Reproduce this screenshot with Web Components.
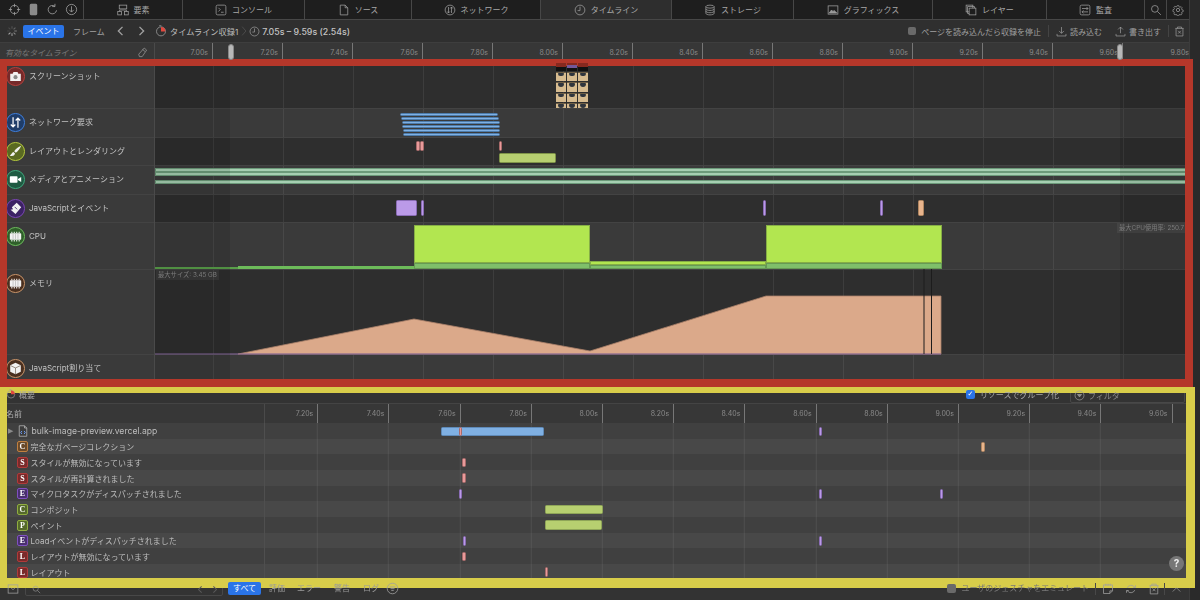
<!DOCTYPE html>
<html lang="ja">
<head>
<meta charset="utf-8">
<title>Web Inspector</title>
<style>
  html, body { margin: 0; height: 100%; background: #2a2a2a; overflow: hidden; }
  body { font: 8px Inter, "Noto Sans CJK JP", sans-serif; color: #b4b4b4; }
  /* notes sit in the light DOM of their row */
  .note { position: absolute; top: 1px; left: 962px; padding: 0 2px; line-height: 10px; font-size: 6.3px; background: rgba(255,255,255,.05); color: #7c7c7c; white-space: nowrap; z-index: 2; }
  .note.left { left: 1px; }
</style>
</head>
<body>
<inspector-app>
  <tab-bar>
    <tool-strip slot="tools"></tool-strip>
    <inspector-tab icon="elements">要素</inspector-tab>
    <inspector-tab icon="console">コンソール</inspector-tab>
    <inspector-tab icon="source">ソース</inspector-tab>
    <inspector-tab icon="network">ネットワーク</inspector-tab>
    <inspector-tab icon="clock" active>タイムライン</inspector-tab>
    <inspector-tab icon="storage">ストレージ</inspector-tab>
    <inspector-tab icon="graphics">グラフィックス</inspector-tab>
    <inspector-tab icon="layers">レイヤー</inspector-tab>
    <inspector-tab icon="audit">監査</inspector-tab>
    <inspector-tab icon="search"></inspector-tab>
    <inspector-tab icon="gear"></inspector-tab>
  </tab-bar>
  <timeline-toolbar></timeline-toolbar>
  <time-ruler first="7.00" offset="58" step="70" count="15" width="155" last-open>
    <i>有効なタイムライン</i>
    <svg-icon name="pencil" size="11" slot="end"></svg-icon>
  </time-ruler>

  <timeline-rows>
    <timeline-row label="スクリーンショット" icon="camera" ring="#b5403c" fill="#762a2a" height="46" dark>
      <film-strip></film-strip>
    </timeline-row>
    <timeline-row label="ネットワーク要求" icon="updown" ring="#3f7fdc" fill="#1f3d69" height="29">
      <timeline-bar x="245" w="98" y="4.5" h="3" color="#7fb0e3" line="#4d7cab"></timeline-bar>
      <timeline-bar x="246" w="98" y="8.5" h="3" color="#7fb0e3" line="#4d7cab"></timeline-bar>
      <timeline-bar x="246.5" w="98" y="12.5" h="3" color="#7fb0e3" line="#4d7cab"></timeline-bar>
      <timeline-bar x="247" w="97.5" y="16.5" h="3" color="#7fb0e3" line="#4d7cab"></timeline-bar>
      <timeline-bar x="247.5" w="97" y="20.5" h="3" color="#7fb0e3" line="#4d7cab"></timeline-bar>
      <timeline-bar x="247.5" w="97" y="24.5" h="3" color="#7fb0e3" line="#4d7cab"></timeline-bar>
    </timeline-row>
    <timeline-row label="レイアウトとレンダリング" icon="brush" ring="#b4c83e" fill="#5a6a22" height="28" dark>
      <timeline-bar x="261" w="3.6" y="4" h="9.5" color="#e89a9a" line="#a86a6a"></timeline-bar>
      <timeline-bar x="265" w="3.6" y="4" h="9.5" color="#e89a9a" line="#a86a6a"></timeline-bar>
      <timeline-bar x="343.5" w="3.6" y="4" h="9.5" color="#e89a9a" line="#a86a6a"></timeline-bar>
      <timeline-bar x="344" w="56.5" y="16" h="10" color="#b7cf70" line="#7f9448"></timeline-bar>
    </timeline-row>
    <timeline-row label="メディアとアニメーション" icon="video" ring="#3fa67c" fill="#1f5a42" height="29">
      <timeline-bar x="0" w="1034" y="3.2" h="3.5" color="#a6cfb2" line="#6c9a7a" flat></timeline-bar>
      <timeline-bar x="0" w="1034" y="7" h="3.5" color="#a6cfb2" line="#6c9a7a" flat></timeline-bar>
      <timeline-bar x="0" w="1034" y="15" h="3.5" color="#a6cfb2" line="#6c9a7a" flat></timeline-bar>
    </timeline-row>
    <timeline-row label="JavaScriptとイベント" icon="script" ring="#7a46b4" fill="#3c2264" height="28" dark>
      <timeline-bar x="241" w="20.5" y="6" h="16" color="#bb9ae8" line="#8a6cb5"></timeline-bar>
      <timeline-bar x="266" w="3.4" y="6" h="16" color="#bb9ae8" line="#8a6cb5"></timeline-bar>
      <timeline-bar x="608" w="3.4" y="6" h="16" color="#bb9ae8" line="#8a6cb5"></timeline-bar>
      <timeline-bar x="725" w="3.4" y="6" h="16" color="#bb9ae8" line="#8a6cb5"></timeline-bar>
      <timeline-bar x="763" w="5.6" y="6" h="16" color="#e8b48c" line="#b08660"></timeline-bar>
    </timeline-row>
    <timeline-row label="CPU" icon="chip" ring="#6cba5c" fill="#2f5f2a" height="47">
      <span slot="note" class="note">最大CPU使用率: 250.7%</span>
      <timeline-bar x="0" w="83" y="45" h="2" color="#5aa04a" flat></timeline-bar>
      <timeline-bar x="83" w="176" y="44" h="3" color="#6dbb5a" flat></timeline-bar>
      <timeline-bar x="259" w="176" y="3" h="38" color="#b2e650" line="#86ad46" flat></timeline-bar>
      <timeline-bar x="259" w="176" y="41" h="6" color="#7fbf6a" line="#669a55" flat></timeline-bar>
      <timeline-bar x="435" w="176" y="39" h="4" color="#b2e650" line="#86ad46" flat></timeline-bar>
      <timeline-bar x="435" w="176" y="43" h="4" color="#7fbf6a" line="#669a55" flat></timeline-bar>
      <timeline-bar x="611" w="175.5" y="3" h="38" color="#b2e650" line="#86ad46" flat></timeline-bar>
      <timeline-bar x="611" w="175.5" y="41" h="6" color="#7fbf6a" line="#669a55" flat></timeline-bar>
    </timeline-row>
    <timeline-row label="メモリ" icon="chip" ring="#c8946a" fill="#4a3020" height="85" dark>
      <span slot="note" class="note left">最大サイズ: 3.45 GB</span>
      <memory-graph points="83,85 259,50 435,82 611,27 786,27 786,85" width="786" marks="769,776.5"></memory-graph>
    </timeline-row>
    <timeline-row label="JavaScript割り当て" icon="cube" ring="#c8946a" fill="#4a3020" height="30"></timeline-row>
  </timeline-rows>

  <records-panel>
    <scope-bar></scope-bar>
    <time-ruler first="7.20" offset="53.3" step="71.2" count="13" width="265">
      <span style="color:#b0b0b0;margin-left:1px">名前</span>
    </time-ruler>
    <record-row file label="bulk-image-preview.vercel.app">
      <timeline-bar x="176" w="103" y="3.5" h="9.5" color="#7fb0e3" line="#5f8ab8"></timeline-bar>
      <timeline-bar x="193.5" w="3.4" y="3.5" h="9.5" color="#e89a9a" line="#a86a6a"></timeline-bar>
      <timeline-bar x="553.5" w="3.2" y="3.5" h="9.5" color="#bb9ae8" line="#8a6cb5"></timeline-bar>
    </record-row>
    <record-row letter="C" ring="#c08040" fill="#6a4a2a" label="完全なガベージコレクション">
      <timeline-bar x="716" w="4" y="3.5" h="9.5" color="#e8b48c" line="#b08660"></timeline-bar>
    </record-row>
    <record-row letter="S" ring="#b03a3a" fill="#7a2a2a" label="スタイルが無効になっています">
      <timeline-bar x="197" w="3.6" y="3.5" h="9.5" color="#e89a9a" line="#a86a6a"></timeline-bar>
    </record-row>
    <record-row letter="S" ring="#b03a3a" fill="#7a2a2a" label="スタイルが再計算されました">
      <timeline-bar x="197" w="3.6" y="3.5" h="9.5" color="#e89a9a" line="#a86a6a"></timeline-bar>
    </record-row>
    <record-row letter="E" ring="#8050c0" fill="#4a2f70" label="マイクロタスクがディスパッチされました">
      <timeline-bar x="193.7" w="3.2" y="3.5" h="9.5" color="#bb9ae8" line="#8a6cb5"></timeline-bar>
      <timeline-bar x="553.5" w="3.2" y="3.5" h="9.5" color="#bb9ae8" line="#8a6cb5"></timeline-bar>
      <timeline-bar x="674.5" w="3.2" y="3.5" h="9.5" color="#bb9ae8" line="#8a6cb5"></timeline-bar>
    </record-row>
    <record-row letter="C" ring="#90ad40" fill="#55692a" label="コンポジット">
      <timeline-bar x="279.5" w="58.5" y="3.5" h="9.5" color="#b7cf70" line="#8fa558"></timeline-bar>
    </record-row>
    <record-row letter="P" ring="#90ad40" fill="#55692a" label="ペイント">
      <timeline-bar x="279.5" w="57.5" y="3.5" h="9.5" color="#b7cf70" line="#8fa558"></timeline-bar>
    </record-row>
    <record-row letter="E" ring="#8050c0" fill="#4a2f70" label="Loadイベントがディスパッチされました">
      <timeline-bar x="198" w="3.2" y="3.5" h="9.5" color="#bb9ae8" line="#8a6cb5"></timeline-bar>
      <timeline-bar x="553.5" w="3.2" y="3.5" h="9.5" color="#bb9ae8" line="#8a6cb5"></timeline-bar>
    </record-row>
    <record-row letter="L" ring="#b03a3a" fill="#7a2a2a" label="レイアウトが無効になっています">
      <timeline-bar x="197.3" w="3.6" y="3.5" h="9.5" color="#e89a9a" line="#a86a6a"></timeline-bar>
    </record-row>
    <record-row letter="L" ring="#b03a3a" fill="#7a2a2a" label="レイアウト">
      <timeline-bar x="279.5" w="3.4" y="3.5" h="9.5" color="#e89a9a" line="#a86a6a"></timeline-bar>
    </record-row>
    <help-badge slot="help"></help-badge>
  </records-panel>
  <console-bar></console-bar>

  <range-handle style="left:228px"></range-handle>
  <range-handle style="left:1117px"></range-handle>
  <note-frame color="#b5372a" style="left:0;top:59px;width:1193px;height:328px" edge="7 8 8 7"></note-frame>
  <note-frame color="#d8cd4a" style="left:0;top:387px;width:1195px;height:201px" edge="6 9 10 7"></note-frame>
</inspector-app>

<script>
const spokes = [0, 45, 90, 135, 180, 225, 270, 315].map((a, i) =>
  `<path d="M8 1.500V5" stroke="${["#555", "#666", "#777", "#888", "#999", "#aaa", "#444", "#4c4c4c"][i]}" stroke-width="1.400" transform="rotate(${a} 8 8)"/>`).join("");

const ICONS = {
  spinner: spokes,
  target: '<circle cx="8" cy="8" r="5"/><path d="M8 1v4M8 11v4M1 8h4M11 8h4"/>',
  device: '<rect x="4" y="1.500" width="8" height="13" rx="1" fill="#8a8a8a"/>',
  reload: '<path d="M13 9a5.200 5.200 0 1 1-2-5M11 1v3.400H7.600"/>',
  download: '<circle cx="8" cy="8" r="6.300"/><path d="M8 4v7M5.200 8.400 8 11.200l2.800-2.800"/>',
  elements: '<rect x="3" y="1.500" width="10" height="5"/><rect x="1" y="10" width="5" height="4.500"/><rect x="10" y="10" width="5" height="4.500"/><path d="M3.500 10V8h9v2"/>',
  console: '<rect x="1.500" y="1.500" width="13" height="13" rx="2"/><path d="M4.500 5 7 7.500 4.500 10M8 11h3.500"/>',
  source: '<path d="M3 1.500h6.500L13 5v9.500H3zM9.500 1.500V5H13"/>',
  network: '<circle cx="8" cy="8" r="6.500"/><path d="M6 4v8M4.200 10 6 12l1.800-2M10 12V4M8.200 6 10 4l1.800 2"/>',
  clock: '<circle cx="8" cy="8" r="6.500"/><path d="M8 3.500V8.800H4.800"/>',
  storage: '<ellipse cx="8" cy="3.500" rx="5.500" ry="2"/><path d="M2.500 3.500v9c0 1.100 2.500 2 5.500 2s5.500-.9 5.500-2v-9M2.500 6.600c0 1.100 2.500 2 5.500 2s5.500-.9 5.500-2M2.500 9.600c0 1.100 2.500 2 5.500 2s5.500-.9 5.500-2"/>',
  graphics: '<rect x="1.500" y="2.500" width="13" height="11"/><path d="M3 12l3-4 2 2 1.500-1.500L13 12z" fill="#9a9a9a"/>',
  layers: '<rect x="1.500" y="1.500" width="9" height="9"/><rect x="3.500" y="3.500" width="9" height="9"/><rect x="5.500" y="5.500" width="9" height="9" fill="#1e1e1e"/>',
  audit: '<rect x="1.500" y="1.500" width="13" height="13" rx="2"/><path d="M4 6h8M10 4l2 2-2 2M12 10.500H4M6 8.500l-2 2 2 2"/>',
  search: '<circle cx="6.500" cy="6.500" r="4.500"/><path d="M10 10l4.500 4.500"/>',
  gear: '<circle cx="8" cy="8" r="2.200"/><path d="M6.800 1.500h2.400l.4 1.900 1.300.6 1.700-1 1.600 1.700-1 1.600.6 1.400 1.900.4v2.400l-1.900.4-.6 1.300 1 1.700-1.700 1.600-1.600-1-1.400.6-.4 1.600H6.800l-.4-1.700-1.300-.6-1.700 1-1.600-1.600 1-1.700-.6-1.300-1.700-.4V7.500l1.700-.4.6-1.400-1-1.600 1.600-1.700 1.700 1 1.300-.6z" transform="translate(.8 .8) scale(.9)"/>',
  pencil: '<path d="M10.500 1.500 14 4.500 7.500 14H3.500l-1-3.500zM8 3.500l3.600 3"/>',
  left: '<path d="M10 2.500 4.500 8l5.500 5.500" stroke-width="1.800"/>',
  right: '<path d="M6 2.500 11.500 8 6 13.500" stroke-width="1.800"/>',
  crumb: '<path d="M5 1l6 7-6 7"/>',
  record: '<circle cx="8" cy="8.500" r="6"/><path d="M8 8.500V2.500A6 6 0 0 1 14 8.500z" fill="#e0483e" stroke="none"/><path d="M5.500 1h3"/>',
  import: '<path d="M8 1.500v9M4.500 7.200 8 10.700l3.500-3.500M1.500 11.500v3h13v-3"/>',
  export: '<path d="M8 10.500v-9M4.500 5 8 1.500 11.500 5M1.500 11.500v3h13v-3"/>',
  trash: '<path d="M2 3.500h12M3 3.500v11h10v-11M5 3.500V1.500h6v2M6 7l4 4M10 7l-4 4"/>',
  filter: '<circle cx="8" cy="8" r="6.500"/><path d="M5 6.500h6l-3 3.500z" fill="#8a8a8a"/>',
  filterlines: '<circle cx="8" cy="8" r="6.500"/><path d="M4.500 6h7M5.500 8.200h5M6.500 10.400h3"/>',
  console2: '<rect x="1.500" y="2.500" width="13" height="11"/><path d="M5 6l3 3 3-3"/>',
  note: '<path d="M2 2.500h12v8l-3.500 3.500H2zM10.500 14v-3.500H14M5 1v3M8 1v3M11 1v3"/>',
  cycle: '<path d="M3 6.500A5.500 5.500 0 0 1 13 6M13 9.500A5.500 5.500 0 0 1 3 10M11 6h3V3M5 10H2v3"/>',
  up: '<path d="M2.500 11 8 5.500l5.500 5.500"/>',
  camera: '<path d="M1.500 4.500h3l1-2h5l1 2h3v9h-13z" fill="#f2f2f2" stroke="none"/><circle cx="8" cy="8.800" r="2.500" fill="#8a8a8a" stroke="none"/>',
  updown: '<path d="M5 1.500v12M2.200 10.500 5 13.500l2.800-3M11 14.500v-12M8.200 5.500 11 2.500l2.800 3" stroke="#fff" stroke-width="1.500"/>',
  brush: '<path d="M15 1c-3.500 1.200-6.800 3.900-8.600 6.600l2 1.900C10.800 7.800 13.800 4.400 15 1z" fill="#f2f2f2" stroke="none"/><path d="M5.500 8.600c-2 .3-2.200 3-4.500 4.200 2.400 1.500 6 .6 6.400-2.400z" fill="#f2f2f2" stroke="none"/>',
  video: '<rect x="1" y="4" width="9.500" height="8" rx="1" fill="#fff" stroke="none"/><path d="M11 7.500l4-2.500v6l-4-2.500z" fill="#fff" stroke="none"/>',
  script: '<path d="M9.500 1 15 6.500 8 14.800 2 9.500l3-.6L3.500 6.500z" fill="#f2f2f2" stroke="none"/><path d="M7 6l3 3" stroke="#3c2264"/>',
  chip: '<rect x="1" y="4" width="14" height="8" rx="1" fill="#f2f2f2" stroke="none"/><path d="M3.500 2v2M6.500 2v2M9.500 2v2M12.500 2v2M3.500 12v2M6.500 12v2M9.500 12v2M12.500 12v2" stroke="#f2f2f2" stroke-width="1.300"/><path d="M5 5v6M8 5v6M11 5v6" stroke="#9a9a9a" stroke-width=".6"/>',
  cube: '<path d="M8 1 14.500 4v8L8 15 1.500 12V4z" fill="#f2f2f2" stroke="none"/><path d="M2 4.500 8 7.300l6-2.800M8 7.300V15" stroke="#6a5a4a" stroke-width=".8"/>',
  fileweb: '<path d="M3 1h7l3 3v11H3z" fill="#3c3c3c" stroke="#b8b8b8"/><path d="M10 1v3h3" stroke="#b8b8b8"/><path d="M6.500 8 5 10l1.500 2M9.500 8 11 10l-1.500 2" stroke="#6ea0ff" stroke-width="1.200"/>'
};

class SvgIcon extends HTMLElement {
  connectedCallback() {
    const size = this.getAttribute("size") || 12;
    const color = this.getAttribute("color") || "#a0a0a0";
    this.attachShadow({ mode: "open" }).innerHTML = `
      <style>:host { display: block; flex: none; width: ${size}px; height: ${size}px; } svg { display: block; }</style>
      <svg width="${size}" height="${size}" viewBox="0 0 16 16" fill="none" stroke="${color}" stroke-width="1">${ICONS[this.getAttribute("name")]}</svg>`;
  }
}

class InspectorApp extends HTMLElement {
  constructor() {
    super();
    this.attachShadow({ mode: "open" }).innerHTML = `
      <style>
        :host { display: flex; flex-direction: column; width: 1189px; height: 600px; background: #2e2e2e; box-shadow: 1px 0 #3c3c3c; filter: blur(.3px); }
      </style>
      <slot></slot>`;
  }
}

class TabBar extends HTMLElement {
  constructor() {
    super();
    this.attachShadow({ mode: "open" }).innerHTML = `
      <style>
        :host {
          display: grid;
          grid-template-columns: 83px 99px 122px 107px 129px 131px 122px 139px 114px 98px 22px 23px;
          height: 19px; flex: none;
          background: #1e1e1e; border-bottom: 1px solid #474747;
        }
      </style>
      <slot name="tools"></slot><slot></slot>`;
  }
}

class ToolStrip extends HTMLElement {
  constructor() {
    super();
    this.attachShadow({ mode: "open" }).innerHTML = `
      <style>:host { display: flex; align-items: center; gap: 6px; padding-left: 8px; }</style>
      <svg-icon name="target" size="13"></svg-icon>
      <svg-icon name="device" size="13"></svg-icon>
      <svg-icon name="reload" size="13"></svg-icon>
      <svg-icon name="download" size="13"></svg-icon>`;
  }
}

class InspectorTab extends HTMLElement {
  connectedCallback() {
    const active = this.hasAttribute("active");
    this.attachShadow({ mode: "open" }).innerHTML = `
      <style>
        :host {
          display: flex; align-items: center; justify-content: center; gap: 5px;
          border-left: 1px solid #474747; color: #a8a8a8;
          background: ${active ? "#2e2e2e" : "transparent"};
        }
      </style>
      <svg-icon name="${this.getAttribute("icon")}" size="12"></svg-icon><slot></slot>`;
  }
}

class TimelineToolbar extends HTMLElement {
  constructor() {
    super();
    this.attachShadow({ mode: "open" }).innerHTML = `
      <style>
        :host {
          display: flex; align-items: center; height: 23px; flex: none;
          padding-left: 6px; background: #2f2f2f; color: #a0a0a0;
          border-bottom: 1px solid #3e3e3e; box-sizing: border-box;
        }
        .spin { margin-right: 5px; }
        .pill { width: 41px; height: 13px; border-radius: 2px; background: #2a74e8; color: #fff; text-align: center; line-height: 13px; }
        .frame { margin: 0 11px 0 9px; width: 31px; white-space: nowrap; }
        .chev { margin-right: 8px; }
        .name { color: #bdbdbd; font-size: 8.200px; margin: 0 1px 0 3px; white-space: nowrap; }
        .range { color: #c4c4c4; font-size: 8.800px; font-weight: 500; margin-left: 2px; white-space: nowrap; }
        .right { margin-left: auto; display: flex; align-items: center; padding-right: 4px; white-space: nowrap; }
        .box { width: 8px; height: 8px; border-radius: 2px; background: #6a6a6a; margin-right: 5px; }
        .sep { width: 1px; height: 12px; background: #444; margin: 0 7px; }
      </style>
      <svg-icon class="spin" name="spinner" size="12"></svg-icon>
      <div class="pill">イベント</div>
      <div class="frame">フレーム</div>
      <svg-icon class="chev" name="left" size="12"></svg-icon>
      <svg-icon class="chev" name="right" size="12"></svg-icon>
      <svg-icon name="record" size="12"></svg-icon>
      <span class="name">タイムライン収録1</span>
      <svg-icon name="crumb" size="10" color="#5c5c5c"></svg-icon>
      <svg-icon name="clock" size="11"></svg-icon>
      <span class="range">7.05s – 9.59s (2.54s)</span>
      <div class="right">
        <div class="box"></div><span>ページを読み込んだら収録を停止</span>
        <div class="sep"></div>
        <svg-icon name="import" size="11"></svg-icon><span style="margin-left:3px">読み込む</span>
        <svg-icon name="export" size="11" style="margin-left:13px"></svg-icon><span style="margin-left:3px">書き出す</span>
        <div class="sep" style="margin-right:5px"></div>
        <svg-icon name="trash" size="11"></svg-icon>
      </div>`;
  }
}

class TimeRuler extends HTMLElement {
  connectedCallback() {
    const first = parseFloat(this.getAttribute("first"));
    const step = parseFloat(this.getAttribute("step"));
    const offset = parseFloat(this.getAttribute("offset"));
    const count = parseInt(this.getAttribute("count"));
    const width = this.getAttribute("width");
    const open = this.hasAttribute("last-open");
    let cells = "";
    for (let i = 0; i < count; i++) {
      const last = open && i === count - 1;
      const w = i === 0 ? offset : last ? step - 4 : step;
      cells += `<div class="cell${last ? " open" : ""}" style="width:${w}px">${(first + i * 0.2).toFixed(2)}s</div>`;
    }
    this.attachShadow({ mode: "open" }).innerHTML = `
      <style>
        :host { display: flex; height: 19px; flex: none; background: #373737; color: #8a8a8a; overflow: hidden; }
        .head { flex: none; width: ${width}px; box-sizing: border-box; padding: 0 6px 0 5px; display: flex; align-items: center; justify-content: space-between; border-right: 1px solid #4a4a4a; color: #777; }
        .cells { display: flex; }
        .cell { flex: none; box-sizing: border-box; text-align: right; padding-right: 4px; line-height: 19px; font-size: 7px; border-right: 1px solid #777; }
        .open { border: 0; padding-right: 0; }
      </style>
      <div class="head"><slot></slot><slot name="end"></slot></div>
      <div class="cells">${cells}</div>`;
  }
}

class TimelineRows extends HTMLElement {
  constructor() {
    super();
    this.attachShadow({ mode: "open" }).innerHTML = `
      <style>:host { display: block; height: 322px; flex: none; }</style><slot></slot>`;
  }
}

class TimelineRow extends HTMLElement {
  connectedCallback() {
    const ring = this.getAttribute("ring"), fill = this.getAttribute("fill");
    const bg = this.hasAttribute("dark") ? "#2e2e2e" : "#3a3a3a";
    this.attachShadow({ mode: "open" }).innerHTML = `
      <style>
        :host { display: flex; height: ${this.getAttribute("height")}px; box-sizing: border-box; }
        .side {
          flex: none; width: 155px; box-sizing: border-box; padding: 5px 0 0 6px;
          display: flex; gap: 4.500px; height: 100%; background: #3a3a3a; color: #c2c2c2;
          border-right: 1px solid #4a4a4a; box-shadow: inset 0 1px #434343; line-height: 18px;
        }
        .badge { width: 18.500px; height: 18.500px; box-sizing: border-box; border-radius: 50%; border: 1.200px solid ${ring}; background: ${fill}; display: flex; align-items: center; justify-content: center; }
        .chart {
          position: relative; flex: 1; background-color: ${bg};
          box-shadow: inset 0 1px #434343;
          background-image: repeating-linear-gradient(90deg, transparent 0 69px, rgba(255,255,255,.07) 69px 70px);
          background-position: -11px 0;
        }
        .shade { position: absolute; top: 0; bottom: 0; background: rgba(0,0,0,.1); z-index: 1; }
      </style>
      <div class="side">
        <div class="badge"><svg-icon name="${this.getAttribute("icon")}" size="13" color="#f2f2f2"></svg-icon></div>
        <span>${this.getAttribute("label")}</span>
      </div>
      <div class="chart">
        <slot></slot><slot name="note"></slot>
        <div class="shade" style="left:0;width:75px"></div>
        <div class="shade" style="left:965px;right:0"></div>
      </div>`;
  }
}

class TimelineBar extends HTMLElement {
  connectedCallback() {
    const a = n => this.getAttribute(n);
    const line = a("line") || a("color");
    this.attachShadow({ mode: "open" }).innerHTML = `
      <style>
        :host {
          position: absolute; left: ${a("x")}px; top: ${a("y")}px; width: ${a("w")}px; height: ${a("h")}px;
          box-sizing: border-box; background: ${a("color")}; border: .7px solid ${line};
          border-radius: ${this.hasAttribute("flat") ? 0 : 1.5}px;
        }
      </style>`;
  }
}

class FilmStrip extends HTMLElement {
  constructor() {
    super();
    let cells = "";
    for (let r = 0; r < 5; r++) {
      for (let c = 0; c < 3; c++) {
        cells += r === 0
          ? `<div class="top ${c === 1 ? "mid" : ""}"></div>`
          : `<div class="shot"><i></i></div>`;
      }
    }
    this.attachShadow({ mode: "open" }).innerHTML = `
      <style>
        :host { position: absolute; left: 401px; top: 0; width: 32px; height: 46px; overflow: hidden; z-index: 11;
          display: grid; grid-template-columns: repeat(3, 10px); grid-template-rows: 7.500px 9.500px 9.500px 9.500px 9.500px; gap: 1px; padding-top: 1px; box-sizing: border-box; }
        .top { background: linear-gradient(#86291f 0 4px, #111 4px); }
        .top.mid { background: linear-gradient(#86291f 0 2px, #74589a 2px 5px, #111 5px); }
        .shot { background: linear-gradient(#6f5f46 0 1px, #d6bb8f 1px); position: relative; overflow: hidden; }
        .shot i { position: absolute; left: 2px; top: 1px; width: 6px; height: 3.500px; background: #2f353d; border-radius: 1px 1px 3px 3px; }
      </style>${cells}`;
  }
}

class MemoryGraph extends HTMLElement {
  connectedCallback() {
    const w = this.getAttribute("width");
    const marks = this.getAttribute("marks").split(",").map(x =>
      `<path d="M${x} 0V85" stroke="#1c1c1c" stroke-width="1"/>`).join("");
    this.attachShadow({ mode: "open" }).innerHTML = `
      <style>:host { position: absolute; left: 0; top: 0; width: ${w}px; height: 86px; z-index: 1; } svg { display: block; overflow: visible; }</style>
      <svg width="${w}" height="86">
        <polygon points="${this.getAttribute("points")}" fill="#dba98a" stroke="#a9806a" stroke-width=".8"/>
        <path d="M0 85H${w}" stroke="#8a6aa0" stroke-width="1.200"/>
        ${marks}
      </svg>`;
  }
}

class RecordsPanel extends HTMLElement {
  constructor() {
    super();
    this.attachShadow({ mode: "open" }).innerHTML = `
      <style>
        :host { display: block; position: relative; height: 194px; flex: none; overflow: hidden; background: #404040; }
      </style>
      <slot></slot><slot name="help"></slot>`;
  }
}

class ScopeBar extends HTMLElement {
  constructor() {
    super();
    this.attachShadow({ mode: "open" }).innerHTML = `
      <style>
        :host { display: flex; align-items: flex-start; height: 20px; box-sizing: border-box; background: #333; border-bottom: 1px solid #444; color: #a8a8a8; padding: 3px 4px 0 6px; }
        .up { position: relative; z-index: 11; display: flex; align-items: center; height: 14px; gap: 3px; white-space: nowrap; }
        .check { width: 9px; height: 9px; border-radius: 2px; background: #2a74e8; color: #fff; font: 7px/9px "DejaVu Sans", sans-serif; text-align: center; margin-right: 2px; }
        .filter { margin-left: 11px; width: 115px; height: 16px; box-sizing: border-box; border: 1px solid #484848; border-radius: 2px; padding: 0 0 2px 3px; }
        .filter .up { color: #8a8a8a; height: 14px; }
      </style>
      <div class="up"><svg-icon name="record" size="10"></svg-icon><span>概要</span></div>
      <div style="flex:1"></div>
      <div class="up"><div class="check">✓</div><span>リソースでグループ化</span></div>
      <div class="filter"><div class="up"><svg-icon name="filter" size="11"></svg-icon><span>フィルタ</span></div></div>`;
  }
}

class RecordRow extends HTMLElement {
  connectedCallback() {
    const letter = this.getAttribute("letter");
    const mark = this.hasAttribute("file")
      ? `<span class="tri">▶</span><svg-icon name="fileweb" size="12"></svg-icon>`
      : `<span class="tag" style="border-color:${this.getAttribute("ring")};background:${this.getAttribute("fill")}">${letter}</span>`;
    this.attachShadow({ mode: "open" }).innerHTML = `
      <style>
        :host { display: flex; height: 15.670px; }
        :host(:nth-of-type(odd)) { background: #404040; }
        :host(:nth-of-type(even)) { background: #484848; }
        .name { flex: none; width: 265px; box-sizing: border-box; padding: 1px 0 0 17px; display: flex; align-items: center; gap: 2.500px; color: #bdbdbd; border-right: 1px solid #4f4f4f; white-space: nowrap; position: relative; }
        .tri { position: absolute; left: 8px; font: 7px "DejaVu Sans", sans-serif; color: #8a8a8a; }
        .tag { width: 11px; height: 11px; box-sizing: border-box; border: 1px solid; border-radius: 2px; color: #fff; font: bold 8px/9px "Liberation Serif", serif; text-align: center; flex: none; }
        .file { font-size: 8.600px; }
        .chart { position: relative; flex: 1;
          background-image: repeating-linear-gradient(90deg, transparent 0 70.200px, rgba(255,255,255,.07) 70.200px 71.200px);
          background-position: -18.200px 0; }
      </style>
      <div class="name">${mark}<span class="${letter ? "" : "file"}">${this.getAttribute("label")}</span></div>
      <div class="chart"><slot></slot></div>`;
  }
}

class HelpBadge extends HTMLElement {
  constructor() {
    super();
    this.attachShadow({ mode: "open" }).innerHTML = `
      <style>
        :host { position: absolute; left: 1169px; top: 172px; width: 15px; height: 15px; border-radius: 50%; background: #777; color: #eee; font: bold 10px/15px Inter, sans-serif; text-align: center; }
      </style>?`;
  }
}

class ConsoleBar extends HTMLElement {
  constructor() {
    super();
    this.attachShadow({ mode: "open" }).innerHTML = `
      <style>
        :host { display: flex; align-items: flex-end; height: 22px; box-sizing: border-box; flex: none; padding: 0 7px 5px 7px; background: #333; color: #9a9a9a; white-space: nowrap; }
        .top { position: relative; z-index: 11; }
        .field { width: 198px; height: 14px; margin: 0 5px -1px 6px; box-sizing: border-box; border: 1px solid #484848; border-radius: 2px; display: flex; align-items: center; padding-left: 6px; }
        .nav { margin-left: auto; display: flex; gap: 5px; padding-right: 3px; }
        .pill { width: 33px; height: 13px; line-height: 13px; border-radius: 2px; background: #2a74e8; color: #fff; text-align: center; }
        .lvl { line-height: 13px; }
        .box { width: 9px; height: 9px; margin-bottom: 2px; border-radius: 2px; background: #6a6a6a; }
        .sep { width: 1px; height: 12px; background: #484848; margin: 0 6px; }
      </style>
      <svg-icon class="top" name="console2" size="12"></svg-icon>
      <div class="field"><svg-icon class="top" name="search" size="9"></svg-icon><div class="nav top"><svg-icon name="left" size="9" color="#5a5a5a"></svg-icon><svg-icon name="right" size="9" color="#5a5a5a"></svg-icon></div></div>
      <div class="pill top">すべて</div>
      <span class="lvl top" style="margin-left:8px">評価</span>
      <span class="lvl top" style="margin-left:12px">エラー</span>
      <span class="lvl top" style="margin-left:13px">警告</span>
      <span class="lvl top" style="margin-left:13px">ログ</span>
      <svg-icon class="top" name="filterlines" size="13" style="margin-left:7px"></svg-icon>
      <div style="flex:1"></div>
      <div class="box top"></div>
      <span class="lvl top" style="margin-left:5px;color:#787878">ユーザのジェスチャをエミュレート</span>
      <div class="sep top"></div>
      <svg-icon class="top" name="note" size="12"></svg-icon>
      <svg-icon class="top" name="cycle" size="12" style="margin-left:11px"></svg-icon>
      <svg-icon class="top" name="trash" size="12" style="margin-left:11px"></svg-icon>
      <div class="sep top" style="margin-left:4px"></div>
      <svg-icon class="top" name="up" size="11"></svg-icon>`;
  }
}

class RangeHandle extends HTMLElement {
  constructor() {
    super();
    this.attachShadow({ mode: "open" }).innerHTML = `
      <style>
        :host { position: absolute; top: 44px; width: 6px; height: 16px; box-sizing: border-box; border-radius: 3px; background: #b8b8b8; border: .5px solid #888; z-index: 12; }
      </style>`;
  }
}

class NoteFrame extends HTMLElement {
  connectedCallback() {
    const [t, r, b, l] = this.getAttribute("edge").split(" ");
    this.attachShadow({ mode: "open" }).innerHTML = `
      <style>
        :host {
          position: absolute; box-sizing: border-box; z-index: 10; pointer-events: none;
          border-style: solid; border-color: ${this.getAttribute("color")};
          border-width: ${t}px ${r}px ${b}px ${l}px;
        }
      </style>`;
  }
}

const elements = {
  "svg-icon": SvgIcon, "inspector-app": InspectorApp, "tab-bar": TabBar, "tool-strip": ToolStrip,
  "inspector-tab": InspectorTab, "timeline-toolbar": TimelineToolbar, "time-ruler": TimeRuler,
  "timeline-rows": TimelineRows, "timeline-row": TimelineRow, "timeline-bar": TimelineBar,
  "film-strip": FilmStrip, "memory-graph": MemoryGraph, "records-panel": RecordsPanel,
  "scope-bar": ScopeBar, "record-row": RecordRow, "help-badge": HelpBadge, "console-bar": ConsoleBar,
  "range-handle": RangeHandle, "note-frame": NoteFrame
};
for (const [tag, cls] of Object.entries(elements)) customElements.define(tag, cls);
</script>
</body>
</html>
